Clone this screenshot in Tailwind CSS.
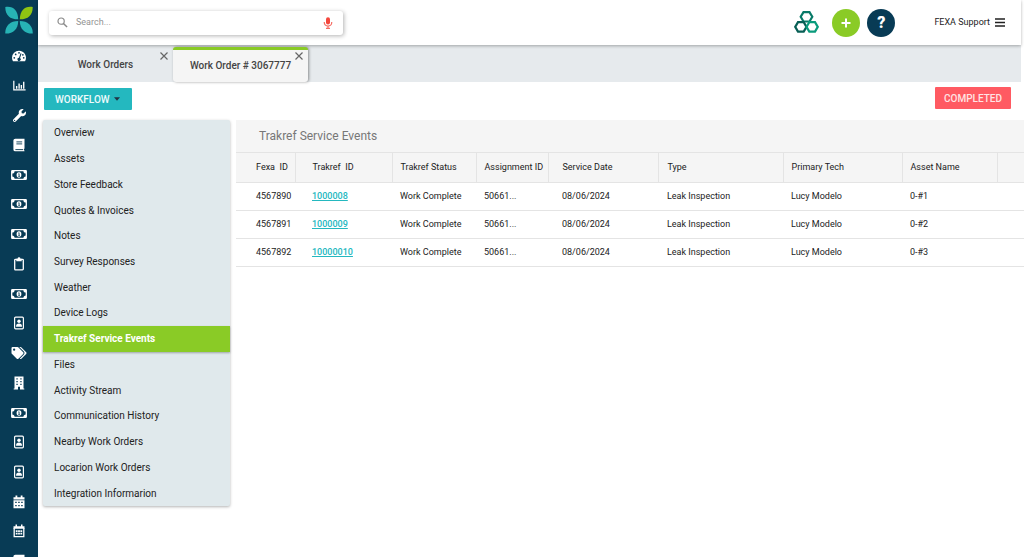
<!DOCTYPE html>
<html lang="en">
<head>
<meta charset="utf-8">
<meta name="viewport" content="width=device-width, initial-scale=1">
<title>Work Order # 3067777</title>
<script src="https://cdn.jsdelivr.net/npm/@tailwindcss/browser@4"></script>
</head>
<body class="flex h-screen overflow-hidden bg-white font-['Roboto',sans-serif] text-[#222]">

<!-- Shared icon shapes -->
<svg class="hidden" aria-hidden="true">
  <symbol id="gauge" viewBox="0 0 16 16"><path fill="currentColor" d="M8 2a8 8 0 0 0-8 8c0 1.500.4 2.800 1.100 4h13.800A8 8 0 0 0 8 2z"/><g fill="#083b55"><circle cx="2.600" cy="10" r="1"/><circle cx="4.200" cy="6.200" r="1"/><circle cx="8" cy="4.300" r="1"/><circle cx="13.400" cy="10" r="1"/><circle cx="12.400" cy="6.600" r="1"/><path d="M9.800 4.800l1.100.4-1.700 5a1.900 1.900 0 1 1-1.200-.3z"/></g></symbol>
  <symbol id="chart" viewBox="0 0 16 16"><path fill="none" stroke="currentColor" stroke-width="1.500" d="M1 2v11.500h14.500"/><path fill="none" stroke="currentColor" stroke-width="1.700" d="M4.500 8.500v3.500M7.500 5.500V12M10.300 7.500V12M13.200 3.500V12"/></symbol>
  <symbol id="wrench" viewBox="0 0 512 512"><path fill="currentColor" d="M507.700 109.100c-2.200-9-13.500-12.100-20.100-5.500l-74.400 74.400-67.900-11.300-11.300-67.900 74.400-74.400c6.600-6.600 3.400-17.900-5.700-20.200-47.400-11.700-99.600 1-136.600 38-39.600 39.600-50.500 97.100-34.100 147.200L18.700 402.800c-25 25-25 65.500 0 90.500s65.500 25 90.500 0l213.200-213.200c50.100 16.700 107.500 5.700 147.400-34.200 37.100-37.100 49.700-89.300 37.900-136.800zM64 472a24 24 0 1 1 0-48 24 24 0 0 1 0 48z"/></symbol>
  <symbol id="book" viewBox="0 0 12 14"><path fill="currentColor" d="M2.300.7h9.200v9.800l-.5.500v1.300l.5.300v.7H2.300A1.900 1.900 0 0 1 .4 11.400V2.600A1.900 1.900 0 0 1 2.300.7z"/><path fill="none" stroke="#083b55" stroke-width=".9" d="M3.400 3.900h5.800M3.400 5.900h5.800M2.400 11.600h7.800"/></symbol>
  <symbol id="cash" viewBox="0 0 16 10"><rect x=".7" y=".7" width="14.600" height="8.600" rx=".6" fill="none" stroke="currentColor" stroke-width="1.300"/><path fill="currentColor" d="M1 1h2.600A2.600 2.600 0 0 1 1 3.600zM15 1h-2.600A2.600 2.600 0 0 0 15 3.600zM1 9h2.600A2.600 2.600 0 0 0 1 6.400zM15 9h-2.600A2.600 2.600 0 0 1 15 6.400z"/><ellipse cx="8" cy="5" rx="2.400" ry="2.800" fill="currentColor"/><path fill="none" stroke="#083b55" stroke-width=".8" d="M7.400 4l.7-.3v2.500M7.200 6.400h1.800"/></symbol>
  <symbol id="clip" viewBox="0 0 12 14"><rect x="1.700" y="2.300" width="8.600" height="10.600" rx=".8" fill="none" stroke="currentColor" stroke-width="1.300"/><path fill="currentColor" d="M3.300 1.700h1.300a1.400 1.400 0 0 1 2.800 0h1.300v2.600H3.300z"/></symbol>
  <symbol id="badge" viewBox="0 0 12 14"><rect x="1.600" y="1.200" width="8.800" height="11.600" rx="1" fill="none" stroke="currentColor" stroke-width="1.200"/><circle cx="6" cy="5.300" r="1.700" fill="currentColor"/><path fill="currentColor" d="M3 10.700c0-2 1-3.200 3-3.200s3 1.200 3 3.200z"/></symbol>
  <symbol id="tags" viewBox="0 0 640 512"><path fill="currentColor" d="M497.900 225.900L286.100 14.100A48 48 0 0 0 252.100 0H48A48 48 0 0 0 0 48v204.100a48 48 0 0 0 14.100 33.900l211.800 211.900c18.700 18.700 49.100 18.700 67.900 0l204.100-204.100c18.800-18.800 18.800-49.200 0-67.900zM112 160a48 48 0 1 1 0-96 48 48 0 0 1 0 96zm513.900 133.800L421.800 497.900c-18.700 18.700-49.100 18.700-67.900 0l-.4-.4L527.600 323.500c17-17 26.400-39.600 26.400-63.600s-9.400-46.600-26.400-63.600L331.400 0h48.700a48 48 0 0 1 33.900 14.100l211.900 211.800c18.700 18.700 18.700 49.100 0 67.900z"/></symbol>
  <symbol id="building" viewBox="0 0 12 14"><path fill="currentColor" d="M1.500.5h9v12h.8v1H7v-2.800H5v2.800H.7v-1h.8z"/><path fill="#083b55" d="M3.400 2.300h1.300v1.300H3.400zM7.300 2.300h1.300v1.300H7.300zM3.400 5h1.300v1.300H3.400zM7.300 5h1.300v1.300H7.300zM3.400 7.700h1.300v1.300H3.400zM7.300 7.700h1.300v1.300H7.300z"/></symbol>
  <symbol id="cal" viewBox="0 0 12 14"><path fill="currentColor" d="M.5 2.300h2V.6h1.800v1.700h3.400V.6h1.800v1.700h2v2.300H.5zM.5 5.300h11v8H.5z"/><path fill="#083b55" d="M2.200 6.700h1.500v1.300H2.200zM5.200 6.700h1.500v1.300H5.200zM8.200 6.700h1.500v1.300H8.200zM2.200 10h1.500v1.300H2.200zM5.200 10h1.500v1.300H5.200zM8.200 10h1.500v1.300H8.200z"/></symbol>
  <symbol id="cal2" viewBox="0 0 12 14"><path fill="currentColor" d="M.5 2.300h2V.6h1.500v1.700h4V.6h1.500v1.700h2v2.500H.5z"/><path fill="none" stroke="currentColor" stroke-width="1.300" d="M1.200 4v8.700h9.600V4"/><path fill="currentColor" d="M2.800 6.300h1.800v1.800H2.800zM5.100 6.300h1.800v1.800H5.100zM7.400 6.300h1.800v1.800H7.400zM2.800 8.700h1.800v1.800H2.800zM5.100 8.700h1.800v1.800H5.100zM7.400 8.700h1.800v1.800H7.400z"/></symbol>
  <symbol id="close" viewBox="0 0 10 10"><path fill="none" stroke="currentColor" stroke-width="1.200" d="M1.500 1.500l7 7M8.500 1.500l-7 7"/></symbol>
</svg>

<aside class="h-full w-[38px] shrink-0 overflow-hidden bg-[#083b55] text-white">
  <a href="#" aria-label="Home" class="flex h-[41px] justify-center pt-[6px]">
    <svg class="size-7" viewBox="0 0 28 28"><g fill="#27b3b5"><path d="M.3.900C8-.3 13 4 13.200 13.300 5 13.400.2 9 .3.900z"/><path d="M.3 27.600C-.2 20 5 14.900 13.200 14.900 13.200 23 8 27.900.3 27.600z"/><path d="M27.700 27.600c.5-7.600-4.700-12.700-12.900-12.700 0 8.100 5.200 13 12.900 12.700z"/></g><path fill="#8fc412" d="M27.700.9C20-.3 15 4 14.800 13.300 23 13.400 27.800 9 27.700.900z"/></svg>
  </a>
  <nav aria-label="Main" class="grid h-[535px] auto-rows-fr [&>a]:flex [&>a]:items-center [&>a]:justify-center">
    <a href="#" aria-label="Dashboard"><svg class="size-3.5"><use href="#gauge"/></svg></a>
    <a href="#" aria-label="Reports"><svg class="size-[13px]"><use href="#chart"/></svg></a>
    <a href="#" aria-label="Maintenance"><svg class="size-[13px]"><use href="#wrench"/></svg></a>
    <a href="#" aria-label="Catalog"><svg class="h-3.5 w-3"><use href="#book"/></svg></a>
    <a href="#" aria-label="Invoices"><svg class="h-2.5 w-4"><use href="#cash"/></svg></a>
    <a href="#" aria-label="Payments"><svg class="h-2.5 w-4"><use href="#cash"/></svg></a>
    <a href="#" aria-label="Quotes"><svg class="h-2.5 w-4"><use href="#cash"/></svg></a>
    <a href="#" aria-label="Surveys"><svg class="h-3.5 w-3"><use href="#clip"/></svg></a>
    <a href="#" aria-label="Budgets"><svg class="h-2.5 w-4"><use href="#cash"/></svg></a>
    <a href="#" aria-label="Vendors"><svg class="h-3.5 w-3"><use href="#badge"/></svg></a>
    <a href="#" aria-label="Tags"><svg class="h-3 w-4"><use href="#tags"/></svg></a>
    <a href="#" aria-label="Facilities"><svg class="h-3.5 w-3"><use href="#building"/></svg></a>
    <a href="#" aria-label="Expenses"><svg class="h-2.5 w-4"><use href="#cash"/></svg></a>
    <a href="#" aria-label="Users"><svg class="h-3.5 w-3"><use href="#badge"/></svg></a>
    <a href="#" aria-label="Contacts"><svg class="h-3.5 w-3"><use href="#badge"/></svg></a>
    <a href="#" aria-label="Calendar"><svg class="h-3.5 w-3"><use href="#cal"/></svg></a>
    <a href="#" aria-label="Schedule"><svg class="h-3.5 w-3"><use href="#cal2"/></svg></a>
    <a href="#" aria-label="Library"><svg class="h-3.5 w-3"><use href="#book"/></svg></a>
  </nav>
</aside>

<div class="flex min-w-0 flex-1 flex-col">
  <header class="z-10 mr-[3px] flex h-[45px] shrink-0 items-center bg-white pr-4 pl-[11px] shadow-[0_1px_3px_rgba(0,0,0,0.3)]">
    <label class="flex h-6 w-[294px] items-center rounded-[3px] bg-white pr-2.5 pl-2 shadow-[1px_1px_4px_rgba(0,0,0,0.3)]">
      <svg class="size-[11px] shrink-0 text-[#8a8a8a]" viewBox="0 0 12 12"><circle cx="4.500" cy="4.500" r="3.400" fill="none" stroke="currentColor" stroke-width="1.300"/><path d="M7 7l4 4" stroke="currentColor" stroke-width="1.600"/></svg>
      <input type="search" aria-label="Search" placeholder="Search..." class="ml-2 min-w-0 flex-1 text-[9px] outline-none placeholder:text-[#949494]">
      <button type="button" aria-label="Voice search"><svg class="h-3 w-[10px] text-[#f4473c]" viewBox="0 0 10 12"><rect x="3" y=".3" width="4" height="7.200" rx="2" fill="currentColor"/><path fill="none" stroke="currentColor" stroke-width="1.200" opacity=".8" d="M1.300 5v.8a3.700 3.300 0 0 0 7.400 0V5M5 9v2.300M3 11.400h4"/></svg></button>
    </label>
    <div class="ml-auto flex items-center">
      <svg class="h-6 w-[25px]" viewBox="0 0 25 24" fill="none" stroke-width="2.200"><path stroke="#087a68" d="M9.500 1.200h6l2.800 4.600-2.800 4.700h-6L6.700 5.800z"/><path stroke="#075f55" d="M4 11.200h5.700l2.800 4.700-2.800 4.700H4l-2.800-4.700z"/><path stroke="#0a9b7c" d="M15.300 11.200H21l2.800 4.700-2.800 4.700h-5.700l-2.800-4.700z"/></svg>
      <button type="button" aria-label="Add" class="ml-[13px] flex size-7 items-center justify-center rounded-full bg-[#8acb26]"><svg class="size-[10px]" viewBox="0 0 10 10"><path stroke="#fff" stroke-width="2" d="M5 .5v9M.5 5h9"/></svg></button>
      <button type="button" aria-label="Help" class="ml-[7px] size-7 rounded-full bg-[#083b55] text-[16px] leading-7 font-black text-white">?</button>
      <button type="button" class="ml-[39px] flex items-center text-[9px]">FEXA Support<svg class="ml-[5px] h-[9px] w-[10px]" viewBox="0 0 10 9"><path stroke="#222" stroke-width="1.300" d="M0 1h10M0 4.500h10M0 8h10"/></svg></button>
    </div>
  </header>

  <div class="mr-[3px] flex h-[37px] shrink-0 items-start bg-[#e6eaed] text-[10px] font-medium text-[#444]">
    <div class="relative flex h-[38px] w-[135px] items-center justify-center"><a href="#">Work Orders</a><button type="button" aria-label="Close Work Orders" class="absolute top-[6px] right-1 text-[#666]"><svg class="size-[10px]"><use href="#close"/></svg></button></div>
    <div class="relative z-10 mt-[2px] flex h-[35px] w-[135px] items-center justify-center rounded-[3px] border-t-[3px] border-[#8acb26] bg-[#f5f5f5] pb-0.5 shadow-[1px_0_3px_rgba(0,0,0,0.4)]"><a href="#">Work Order # 3067777</a><button type="button" aria-label="Close Work Order # 3067777" class="absolute top-[1px] right-1 text-[#666]"><svg class="size-[10px]"><use href="#close"/></svg></button></div>
  </div>

  <div class="flex h-[38px] shrink-0 items-start justify-between pt-[5px] pr-[13px] pl-[6px]">
    <button type="button" class="mt-[1px] flex h-[22px] items-center gap-1 rounded-[1px] bg-[#24b8bf] pr-3 pl-[11px] text-[10px] font-medium text-[#effbfc]">WORKFLOW<svg class="h-1 w-[6px]" viewBox="0 0 6 4"><path fill="#234" d="M0 .3h6L3 3.700z"/></svg></button>
    <span class="flex h-[22px] items-center rounded-[1px] bg-[#ff5a62] px-[9px] text-[10px] font-medium text-[#ffe3e4]">COMPLETED</span>
  </div>

  <main class="flex items-start gap-[6px] pl-[5px]">
    <nav aria-label="Work order" class="grid h-[386px] w-[187px] shrink-0 auto-rows-fr rounded-[2px] bg-[#e0e9ec] text-[10px] shadow-[0_1px_3px_rgba(0,0,0,0.3)] [&>a]:flex [&>a]:items-center [&>a]:pl-[11px]">
      <a href="#">Overview</a>
      <a href="#">Assets</a>
      <a href="#">Store Feedback</a>
      <a href="#">Quotes &amp; Invoices</a>
      <a href="#">Notes</a>
      <a href="#">Survey Responses</a>
      <a href="#">Weather</a>
      <a href="#">Device Logs</a>
      <a href="#" aria-current="page" class="bg-[#8acb26] font-bold text-white shadow-[0_1px_2px_rgba(0,0,0,0.3)]">Trakref Service Events</a>
      <a href="#">Files</a>
      <a href="#">Activity Stream</a>
      <a href="#">Communication History</a>
      <a href="#">Nearby Work Orders</a>
      <a href="#">Locarion Work Orders</a>
      <a href="#">Integration Informarion</a>
    </nav>

    <section class="min-w-0 flex-1">
      <h1 class="h-8 bg-[#f5f5f5] pl-[23px] text-[12px] leading-8 text-[#777]">Trakref Service Events</h1>
      <table class="w-full table-fixed border-collapse text-left text-[9px] whitespace-nowrap [&_td]:p-0 [&_th]:border [&_th]:border-[#e4e4e4] [&_th]:p-0 [&_th]:font-normal [&_th:first-child]:border-l-0 [&_tr>*:nth-child(1)]:pl-5 [&_tr>*:nth-child(2)]:pl-[17px] [&_tr>*:nth-child(3)]:pl-2 [&_tr>*:nth-child(4)]:pl-2 [&_tr>*:nth-child(5)]:pl-[14px] [&_tr>*:nth-child(6)]:pl-[9px] [&_tr>*:nth-child(7)]:pl-2 [&_tr>*:nth-child(8)]:pl-2 [&_tbody>tr]:h-7 [&_tbody>tr]:border-b [&_tbody>tr]:border-[#e4e4e4] [&_td>a]:font-medium [&_td>a]:text-[#24b8bf] [&_td>a]:underline">
        <colgroup><col class="w-[59px]"><col class="w-[97px]"><col class="w-[84px]"><col class="w-[72px]"><col class="w-[110px]"><col class="w-[125px]"><col class="w-[119px]"><col class="w-[95px]"><col class="w-[27px]"></colgroup>
        <thead><tr class="h-[30px] bg-[#f5f5f5]"><th scope="col">Fexa&nbsp; ID</th><th scope="col">Trakref&nbsp; ID</th><th scope="col">Trakref Status</th><th scope="col">Assignment ID</th><th scope="col">Service Date</th><th scope="col">Type</th><th scope="col">Primary Tech</th><th scope="col">Asset Name</th><th scope="col" aria-label="Actions"></th></tr></thead>
        <tbody>
          <tr><td>4567890</td><td><a href="#">1000008</a></td><td>Work Complete</td><td>50661...</td><td>08/06/2024</td><td>Leak Inspection</td><td>Lucy Modelo</td><td>0-#1</td><td></td></tr>
          <tr><td>4567891</td><td><a href="#">1000009</a></td><td>Work Complete</td><td>50661...</td><td>08/06/2024</td><td>Leak Inspection</td><td>Lucy Modelo</td><td>0-#2</td><td></td></tr>
          <tr><td>4567892</td><td><a href="#">10000010</a></td><td>Work Complete</td><td>50661...</td><td>08/06/2024</td><td>Leak Inspection</td><td>Lucy Modelo</td><td>0-#3</td><td></td></tr>
        </tbody>
      </table>
    </section>
  </main>
</div>
</body>
</html>
